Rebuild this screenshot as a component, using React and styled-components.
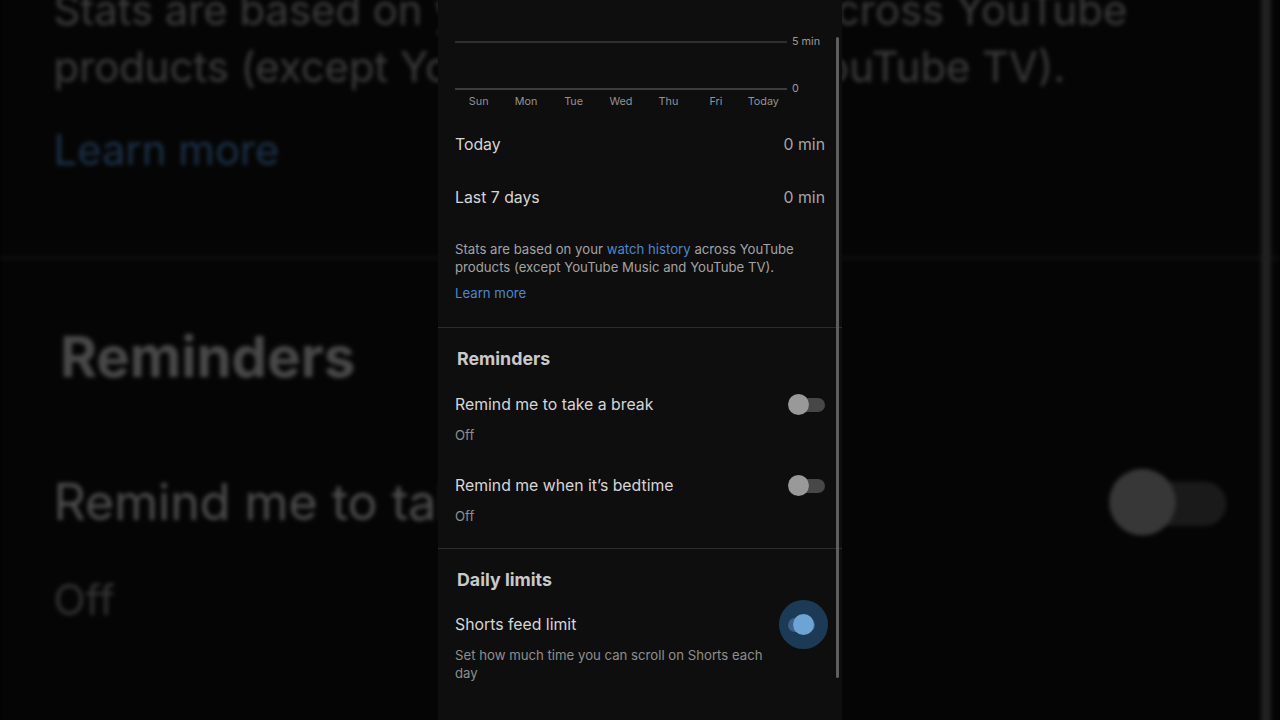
import styled, { createGlobalStyle } from 'styled-components';

const GlobalStyle = createGlobalStyle`
  html, body {
    margin: 0;
    padding: 0;
    background: #000;
  }
  * {
    box-sizing: border-box;
  }
`;

const Stage = styled.div`
  position: relative;
  width: 1280px;
  height: 720px;
  overflow: hidden;
  background: #000;
  display: flex;
  justify-content: center;
`;

// blurred, dimmed zoom of the same screen behind it
const Backdrop = styled.div`
  position: absolute;
  inset: 0;
  display: flex;
  justify-content: center;
  filter: brightness(0.36) blur(2px);
  pointer-events: none;
`;

const Zoomed = styled.div`
  transform: scale(3.17);
  transform-origin: 202px 359.5px;
`;

const Screen = styled.div`
  position: relative;
  z-index: 1;
  width: 404px;
  height: 720px;
  overflow: hidden;
  background: #0e0e0e;
  font-family: Inter, "Noto Sans", sans-serif;
  color: #d6d6d6;
`;

const Scrollbar = styled.div`
  position: absolute;
  top: 37px;
  left: 398px;
  width: 3px;
  height: 641px;
  border-radius: 2px;
  background: #5e5e5e;
`;

const Chart = styled.div`
  display: flex;
  flex-direction: column;
  padding: 41px 17px 0;
`;

const ChartRow = styled.div`
  display: flex;
  align-items: center;
  height: 2px;
  margin-top: ${(p) => p.$gap || 0}px;
`;

const GridLine = styled.div`
  width: 332px;
  height: 2px;
  background: ${(p) => (p.$base ? '#3c3c3c' : '#2e2e2e')};
`;

const AxisLabel = styled.span`
  margin-left: 5px;
  font-size: 10.8px;
  line-height: 14px;
  color: #9a9a9a;
  white-space: nowrap;
`;

const DayRow = styled.div`
  display: grid;
  grid-template-columns: repeat(7, 1fr);
  width: 332px;
  margin-top: 5px;
`;

const Day = styled.span`
  text-align: center;
  font-size: 10.8px;
  line-height: 13px;
  color: #939393;
`;

const Stats = styled.div`
  margin-top: 10px;
  padding: 0 17px;
`;

const StatRow = styled.div`
  display: flex;
  align-items: center;
  justify-content: space-between;
  height: 53px;
  font-size: 15.8px;
`;

const StatValue = styled.span`
  color: #a6a6a6;
`;

const Note = styled.div`
  padding: 16px 17px 25px;
  font-size: 13.2px;
  line-height: 18px;
  color: #a3a3a3;
`;

const Link = styled.span`
  color: #4d88c9;
`;

const LearnMore = styled.div`
  margin-top: 8px;
  color: #4d88c9;
`;

const Section = styled.section`
  border-top: 1px solid #2c2c2c;
  padding: 19px 17px 23px;
`;

const Heading = styled.h2`
  margin: 0 0 0 2px;
  padding-top: 1px;
  font-size: 17.8px;
  line-height: 22px;
  font-weight: 700;
  color: #c9c9c9;
`;

const Item = styled.div`
  display: grid;
  grid-template-columns: 1fr auto;
  column-gap: 12px;
  margin-top: ${(p) => p.$gap}px;
`;

const ItemTitle = styled.div`
  padding-top: 1px;
  font-size: 15.8px;
  line-height: 20px;
  color: #d6d6d6;
`;

const ItemSub = styled.div`
  grid-column: 1 / 2;
  margin-top: 11px;
  font-size: 13.2px;
  line-height: 18px;
  color: #8e8e8e;
`;

const Toggle = styled.div`
  position: relative;
  width: 37px;
  height: 21px;
  align-self: center;
`;

const Track = styled.div`
  position: absolute;
  top: 3.5px;
  left: ${(p) => (p.$on ? 0 : 7)}px;
  right: ${(p) => (p.$on ? 10 : 0)}px;
  height: 14px;
  border-radius: 7px;
  background: ${(p) => (p.$on ? '#3b6189' : '#474747')};
`;

const Knob = styled.div`
  position: absolute;
  top: 0;
  left: ${(p) => (p.$on ? 5 : 0)}px;
  width: 21px;
  height: 21px;
  border-radius: 50%;
  background: ${(p) => (p.$on ? '#6ea3d6' : '#999999')};
`;

const Halo = styled.div`
  position: absolute;
  top: -14px;
  left: -9px;
  width: 49px;
  height: 49px;
  border-radius: 50%;
  background: #1c3a56;
`;

const days = ['Sun', 'Mon', 'Tue', 'Wed', 'Thu', 'Fri', 'Today'];

function Switch({ on }) {
  return (
    <Toggle>
      {on && <Halo />}
      <Track $on={on} />
      <Knob $on={on} />
    </Toggle>
  );
}

function Setting({ title, sub, on, gap }) {
  return (
    <Item $gap={gap}>
      <ItemTitle>{title}</ItemTitle>
      <Switch on={on} />
      <ItemSub>{sub}</ItemSub>
    </Item>
  );
}

function ScreenContent() {
  return (
    <>
      <Chart>
        <ChartRow>
          <GridLine />
          <AxisLabel>5 min</AxisLabel>
        </ChartRow>
        <ChartRow $gap={45}>
          <GridLine $base />
          <AxisLabel>0</AxisLabel>
        </ChartRow>
        <DayRow>
          {days.map((d) => (
            <Day key={d}>{d}</Day>
          ))}
        </DayRow>
      </Chart>
      <Stats>
        <StatRow>
          <span>Today</span>
          <StatValue>0 min</StatValue>
        </StatRow>
        <StatRow>
          <span>Last 7 days</span>
          <StatValue>0 min</StatValue>
        </StatRow>
      </Stats>
      <Note>
        Stats are based on your <Link>watch history</Link> across YouTube
        products (except YouTube Music and YouTube TV).
        <LearnMore>Learn more</LearnMore>
      </Note>
      <Section>
        <Heading>Reminders</Heading>
        <Setting gap={24} title="Remind me to take a break" sub="Off" />
        <Setting gap={31} title="Remind me when it’s bedtime" sub="Off" />
      </Section>
      <Section>
        <Heading>Daily limits</Heading>
        <Setting
          gap={23}
          on
          title="Shorts feed limit"
          sub="Set how much time you can scroll on Shorts each day"
        />
      </Section>
      <Scrollbar />
    </>
  );
}

export default function App() {
  return (
    <>
      <GlobalStyle />
      <Stage>
        <Backdrop>
          <Zoomed>
            <Screen>
              <ScreenContent />
            </Screen>
          </Zoomed>
        </Backdrop>
        <Screen>
          <ScreenContent />
        </Screen>
      </Stage>
    </>
  );
}
